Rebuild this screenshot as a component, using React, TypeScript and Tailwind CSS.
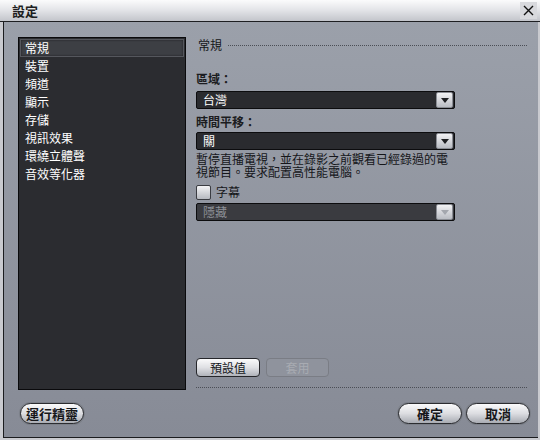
import { ReactNode } from "react";

const FONT = { fontFamily: '"Noto Sans CJK TC", "Noto Sans CJK SC", sans-serif' };

const MENU = ["常規", "裝置", "頻道", "顯示", "存儲", "視訊效果", "環繞立體聲", "音效等化器"];

const Arrow = ({ disabled }: { disabled?: boolean }) => (
  <div className="w-[17px] h-[16px] mr-[1px] rounded-[2px] bg-gradient-to-b from-[#f2f2f4] to-[#b9bcc3] flex items-center justify-center border border-[#8a8d94]">
    <svg width="8" height="5" viewBox="0 0 8 5">
      <path d="M0 0 H8 L4 5 Z" fill={disabled ? "#a4a7ae" : "#1e1f22"} />
    </svg>
  </div>
);

const Select = ({ value, disabled }: { value: string; disabled?: boolean }) => (
  <div
    className={
      "w-[259px] h-[18px] flex items-center justify-between rounded-[2px] border border-[#0c0c0e] " +
      (disabled ? "bg-[#3a3b40]" : "bg-[#2a2b2f]")
    }
  >
    <span className={"pl-[6px] text-[12px] leading-none " + (disabled ? "text-[#8d9097]" : "text-white")}>{value}</span>
    <Arrow disabled={disabled} />
  </div>
);

const Pill = ({ children, className }: { children: ReactNode; className?: string }) => (
  <div
    className={
      "h-[21px] rounded-full border border-[#2b2c30] bg-gradient-to-b from-[#fafafb] via-[#dcdde1] to-[#a9acb3] flex items-center justify-center font-bold text-[13px] text-[#16171a] shadow-[0_0_0_1px_#7c8089] " +
      (className || "")
    }
  >
    {children}
  </div>
);

export default function App() {
  return (
    <div className="w-[540px] h-[440px] flex flex-col bg-[#c9cacf] overflow-hidden" style={FONT}>
      {/* title bar */}
      <div className="h-[22px] shrink-0 flex items-center justify-between bg-gradient-to-b from-[#fbfbfc] via-[#e2e3e7] to-[#c3c5cb] border-b border-[#1e1f22]">
        <span className="pl-[12px] text-[13px] font-bold text-[#1d1e21] leading-none">設定</span>
        <div className="mr-[3px] w-[17px] h-[17px] flex items-center justify-center bg-[#d8d9dd]">
          <svg width="11" height="11" viewBox="0 0 11 11">
            <path d="M1 1 L10 10 M10 1 L1 10" stroke="#111" strokeWidth="1.4" />
          </svg>
        </div>
      </div>

      {/* body */}
      <div className="flex-1 ml-[3px] mr-[2px] mb-[2px] border-l border-b border-[#1b1c1f] bg-gradient-to-b from-[#9ba0aa] to-[#878b96] flex flex-col">
        <div className="flex pt-[15px] pl-[14px]">
          {/* left menu */}
          <div className="w-[168px] h-[353px] bg-[#2b2c30] border border-[#0a0a0c] p-[1px] flex flex-col">
            {MENU.map((m, i) => (
              <div
                key={m}
                className={
                  "h-[18px] flex items-center pl-[4px] text-[12px] text-white leading-none " +
                  (i === 0 ? "bg-[#3d3f44] border border-[#55575d] shadow-[inset_0_0_2px_#1a1a1c]" : "border border-transparent")
                }
              >
                {m}
              </div>
            ))}
          </div>

          {/* right column */}
          <div className="ml-[10px] w-[331px] h-[353px] flex flex-col">
            <div className="h-[16px] flex items-center">
              <span className="pl-[2px] text-[12px] text-[#15161a] leading-none">常規</span>
              <div className="flex-1 ml-[6px] border-t border-dotted border-[#4b4e56]" />
            </div>

            <div className="mt-[20px] text-[12px] font-bold text-[#1b1c20] leading-none h-[14px]">區域：</div>
            <div className="mt-[4px]">
              <Select value="台灣" />
            </div>

            <div className="mt-[7px] text-[12px] font-bold text-[#1b1c20] leading-none h-[14px]">時間平移：</div>
            <div className="mt-[2px]">
              <Select value="關" />
            </div>

            <p className="mt-[2px] w-[262px] text-[12px] leading-[13px] text-[#15161a]">
              暫停直播電視，並在錄影之前觀看已經錄過的電視節目。要求配置高性能電腦。
            </p>

            <div className="mt-[6px] flex items-center h-[16px]">
              <div className="w-[15px] h-[15px] rounded-[2px] border border-[#3a3c42] bg-gradient-to-b from-[#f4f4f6] to-[#b6b9c0]" />
              <span className="ml-[5px] text-[12px] text-[#15161a] leading-none">字幕</span>
            </div>
            <div className="mt-[3px]">
              <Select value="隱藏" disabled />
            </div>

            <div className="flex-1" />

            <div className="flex gap-[6px] mb-[10px]">
              <div className="w-[64px] h-[19px] rounded-[4px] border border-[#26272b] bg-gradient-to-b from-[#fafafb] via-[#dfe0e4] to-[#b0b3ba] flex items-center justify-center text-[12px] text-[#15161a] leading-none">
                預設值
              </div>
              <div className="w-[63px] h-[19px] rounded-[4px] border border-[#7a7d85] bg-[#8f939d] flex items-center justify-center text-[12px] text-[#a8abb2] leading-none">
                套用
              </div>
            </div>
            <div className="border-t border-dotted border-[#4b4e56] mb-[2px]" />
          </div>
        </div>

        <div className="flex items-center justify-between mt-[13px] pl-[16px] pr-[8px]">
          <Pill className="w-[64px]">運行精靈</Pill>
          <div className="flex gap-[4px]">
            <Pill className="w-[64px]">確定</Pill>
            <Pill className="w-[64px]">取消</Pill>
          </div>
        </div>
      </div>
    </div>
  );
}
